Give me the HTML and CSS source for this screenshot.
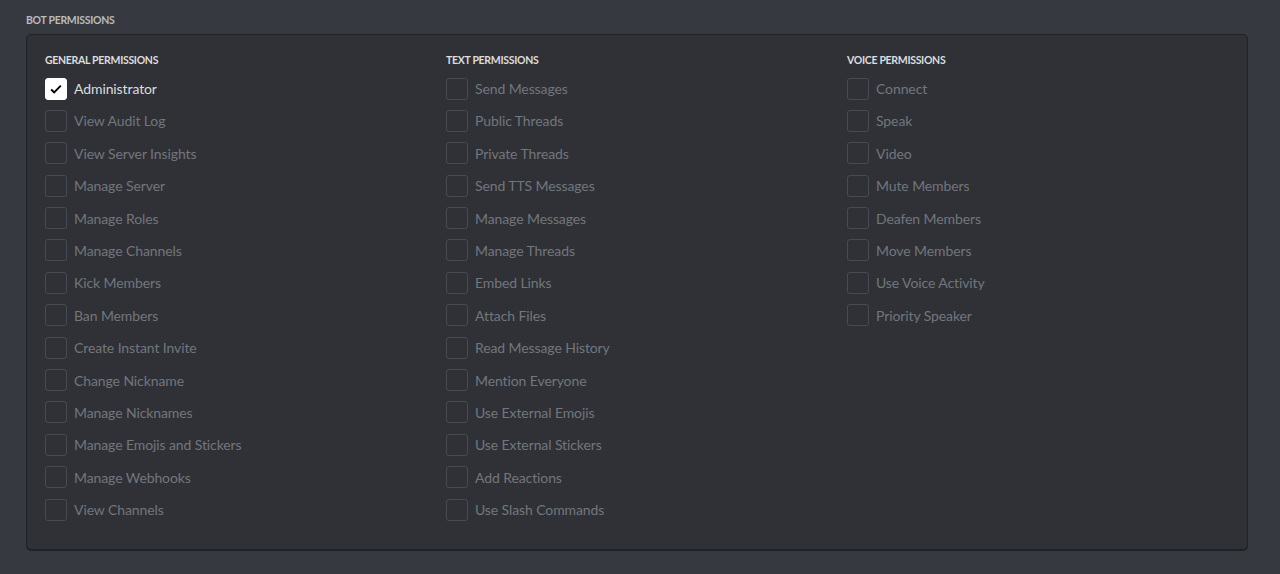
FILE: index.html
```html
<!DOCTYPE html>
<html lang="en">
    <head>
        <meta charset="utf-8">
        <title>Bot Permissions</title>
        <link rel="stylesheet" href="styles.css">
    </head>
    <body>
        <div class="title">Bot Permissions</div>
        <div class="panel">
            <div class="col">
                <h4>General Permissions</h4>
                <label class="perm checked"><span class="box"><svg viewBox="0 0 24 24" width="20" height="20"><path d="M6.2 12.6l3.6 3.5L17.8 8" fill="none" stroke="#000" stroke-width="2.3"/></svg></span>Administrator</label>
                <label class="perm"><span class="box"></span>View Audit Log</label>
                <label class="perm"><span class="box"></span>View Server Insights</label>
                <label class="perm"><span class="box"></span>Manage Server</label>
                <label class="perm"><span class="box"></span>Manage Roles</label>
                <label class="perm"><span class="box"></span>Manage Channels</label>
                <label class="perm"><span class="box"></span>Kick Members</label>
                <label class="perm"><span class="box"></span>Ban Members</label>
                <label class="perm"><span class="box"></span>Create Instant Invite</label>
                <label class="perm"><span class="box"></span>Change Nickname</label>
                <label class="perm"><span class="box"></span>Manage Nicknames</label>
                <label class="perm"><span class="box"></span>Manage Emojis and Stickers</label>
                <label class="perm"><span class="box"></span>Manage Webhooks</label>
                <label class="perm"><span class="box"></span>View Channels</label>
            </div>
            <div class="col">
                <h4>Text Permissions</h4>
                <label class="perm"><span class="box"></span>Send Messages</label>
                <label class="perm"><span class="box"></span>Public Threads</label>
                <label class="perm"><span class="box"></span>Private Threads</label>
                <label class="perm"><span class="box"></span>Send TTS Messages</label>
                <label class="perm"><span class="box"></span>Manage Messages</label>
                <label class="perm"><span class="box"></span>Manage Threads</label>
                <label class="perm"><span class="box"></span>Embed Links</label>
                <label class="perm"><span class="box"></span>Attach Files</label>
                <label class="perm"><span class="box"></span>Read Message History</label>
                <label class="perm"><span class="box"></span>Mention Everyone</label>
                <label class="perm"><span class="box"></span>Use External Emojis</label>
                <label class="perm"><span class="box"></span>Use External Stickers</label>
                <label class="perm"><span class="box"></span>Add Reactions</label>
                <label class="perm"><span class="box"></span>Use Slash Commands</label>
            </div>
            <div class="col">
                <h4>Voice Permissions</h4>
                <label class="perm"><span class="box"></span>Connect</label>
                <label class="perm"><span class="box"></span>Speak</label>
                <label class="perm"><span class="box"></span>Video</label>
                <label class="perm"><span class="box"></span>Mute Members</label>
                <label class="perm"><span class="box"></span>Deafen Members</label>
                <label class="perm"><span class="box"></span>Move Members</label>
                <label class="perm"><span class="box"></span>Use Voice Activity</label>
                <label class="perm"><span class="box"></span>Priority Speaker</label>
            </div>
        </div>
    </body>
</html>
```

FILE: styles.css
```css
*{
    margin: 0;
    box-sizing: border-box;
}
body{
    background-color: #36393f;
    font-family: Lato, "Noto Sans", sans-serif;
    padding: 13px 32px 0 26px;
    height: 574px;
    overflow: hidden;
}
/*section title*/
.title{
    font-size: 10.5px;
    font-weight: 700;
    text-transform: uppercase;
    color: #b9bbbe;
    line-height: 14px;
    letter-spacing: -0.3px;
    margin-bottom: 7px;
}
/*panel with three columns*/
.panel{
    background-color: #2f3136;
    border: 1px solid #202225;
    border-radius: 5px;
    box-shadow: 0 1px 0 #202225;
    display: grid;
    grid-template-columns: repeat(3, 401px);
    padding: 18px 0 26px 18px;
    height: 516px;
}
.col{
    display: flex;
    flex-direction: column;
}
.col h4{
    font-size: 10.5px;
    font-weight: 700;
    text-transform: uppercase;
    color: #dcddde;
    line-height: 14px;
    letter-spacing: -0.3px;
    margin-bottom: 10.5px;
}
.perm{
    display: flex;
    align-items: center;
    height: 22px;
    margin-bottom: 10.4px;
    font-size: 14px;
    letter-spacing: -0.1px;
    color: #72767d;
}
.box{
    width: 22px;
    height: 22px;
    border: 1px solid #4f545c;
    border-radius: 3px;
    margin-right: 7px;
    display: flex;
    justify-content: center;
    align-items: center;
    opacity: 0.75;
}
.checked{
    color: #dcddde;
}
.checked .box{
    background-color: #fff;
    border-color: #fff;
    opacity: 1;
}
```
